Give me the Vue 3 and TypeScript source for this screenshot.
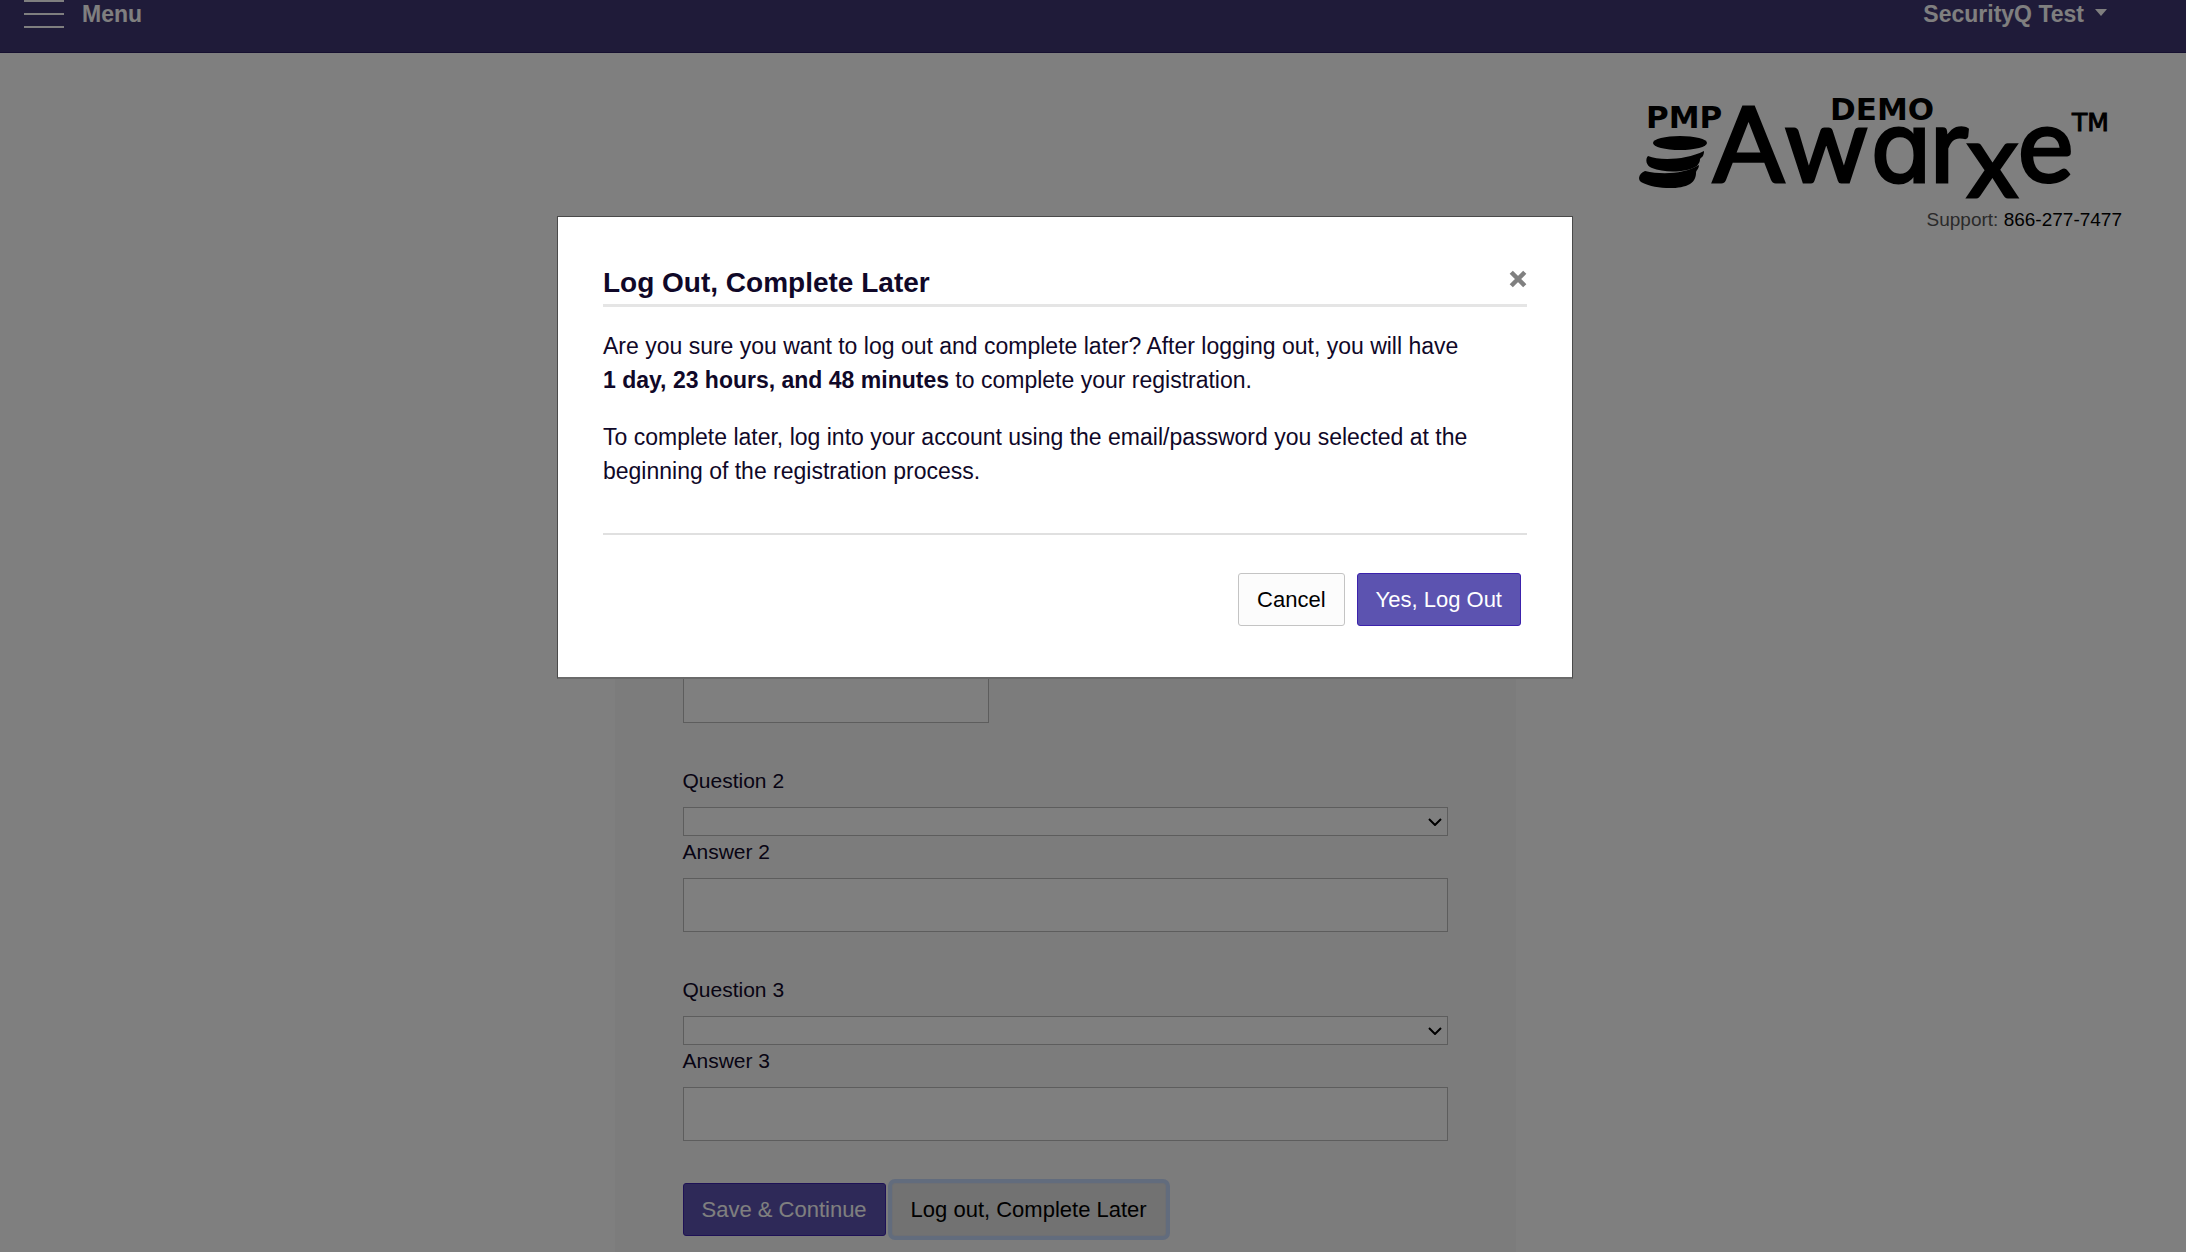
<script setup lang="ts">
import { ref } from 'vue'

interface SecurityQuestion {
  id: number
  question: string
  answer: string
}

const firstAnswer = ref('')
const questions = ref<SecurityQuestion[]>([
  { id: 2, question: '', answer: '' },
  { id: 3, question: '', answer: '' },
])
const dialogOpen = ref(true)
const timeLeft = '1 day, 23 hours, and 48 minutes'
</script>

<template>
  <div class="page">
    <header class="topbar">
      <button type="button" class="menu">
        <span class="bars"><i></i><i></i><i></i></span>
        Menu
      </button>
      <button type="button" class="user">SecurityQ Test <span class="caret"></span></button>
    </header>

    <div class="brand">
      <svg class="logo" viewBox="0 0 502 121" role="img" aria-label="PMP Awarxe">
        <ellipse cx="60" cy="59" rx="27" ry="7" />
        <path d="M28 72C40 77 66 76 84 67C84 72 82 73 80 75C80 78 79 79 77 82C66 89 44 89 32 84C26 82 25 75 28 72Z" />
        <path d="M25 87C42 91 64 90 79 81C79 85 76 86 76 89C76 92 75 97 70 100C58 107 33 104 23 99C17 97 18 90 25 87Z" />
        <text class="heavy" x="26" y="44" font-size="31">PMP</text>
        <text class="heavy" x="210" y="36" font-size="31">DEMO</text>
        <g class="word">
          <text x="93" y="98" font-size="105">A</text>
          <text x="165" y="98" font-size="105">w</text>
          <text class="round" x="251" y="98" font-size="98">a</text>
          <text x="310" y="98" font-size="105">r</text>
          <text x="347" y="113" font-size="102">x</text>
          <text x="398" y="98" font-size="105">e</text>
        </g>
        <text class="tm" x="452" y="47" font-size="25">TM</text>
      </svg>
      <p class="support">Support: <a href="tel:8662777477">866-277-7477</a></p>
    </div>

    <main class="panel">
      <form class="form" @submit.prevent>
        <input v-model="firstAnswer" class="field short" type="text" aria-label="Answer 1" />

        <div v-for="q in questions" :key="q.id" class="group">
          <label :for="`question-${q.id}`">Question {{ q.id }}</label>
          <div class="picker">
            <select :id="`question-${q.id}`" v-model="q.question">
              <option value=""></option>
            </select>
            <svg class="chevron" viewBox="0 0 14 8" aria-hidden="true"><path d="M1 1L7 7L13 1" /></svg>
          </div>
          <label :for="`answer-${q.id}`">Answer {{ q.id }}</label>
          <input :id="`answer-${q.id}`" v-model="q.answer" class="field" type="text" />
        </div>

        <div class="actions">
          <button type="submit" class="btn primary">Save &amp; Continue</button>
          <button type="button" class="btn later" @click="dialogOpen = true">Log out, Complete Later</button>
        </div>
      </form>
    </main>

    <div v-if="dialogOpen" class="overlay">
      <section class="dialog" role="dialog" aria-modal="true" aria-labelledby="dialog-title">
        <div class="dialog-head">
          <h2 id="dialog-title">Log Out, Complete Later</h2>
          <button type="button" class="close" aria-label="Close" @click="dialogOpen = false">
            <svg viewBox="0 0 16 16" aria-hidden="true"><path d="M2 2L14 14M14 2L2 14" /></svg>
          </button>
        </div>
        <div class="dialog-body">
          <p>
            Are you sure you want to log out and complete later? After logging out, you will have<br />
            <strong>{{ timeLeft }}</strong> to complete your registration.
          </p>
          <p>
            To complete later, log into your account using the email/password you selected at the<br />
            beginning of the registration process.
          </p>
        </div>
        <div class="dialog-foot">
          <button type="button" class="btn cancel" @click="dialogOpen = false">Cancel</button>
          <button type="button" class="btn primary">Yes, Log Out</button>
        </div>
      </section>
    </div>
  </div>
</template>

<style>
body {
  margin: 0;
  background: #ffffff;
}
</style>

<style scoped>
.page {
  box-sizing: border-box;
  min-height: 100vh;
  font-family: 'Liberation Sans', Arial, sans-serif;
  font-size: 22px;
  color: #100828;
}

button,
input,
select {
  font: inherit;
  box-sizing: border-box;
  margin: 0;
}

.topbar {
  display: flex;
  justify-content: space-between;
  align-items: flex-start;
  box-sizing: border-box;
  height: 53px;
  padding: 0 79px 0 24px;
  background: #3e3672;
  border-bottom: 1px solid #2c2060;
}

.menu,
.user {
  display: flex;
  align-items: flex-start;
  padding: 0;
  border: 0;
  background: none;
  color: #ffffff;
  font-size: 23px;
  font-weight: 700;
  line-height: 28px;
}

.menu {
  gap: 18px;
}

.bars {
  display: flex;
  flex-direction: column;
  justify-content: space-between;
  width: 40px;
  height: 28px;
}

.bars i {
  height: 2px;
  background: #ffffff;
}

.user {
  gap: 11px;
}

.caret {
  margin-top: 9px;
  border: 6px solid transparent;
  border-top: 7px solid #ffffff;
  border-bottom: 0;
}

.brand {
  display: flex;
  flex-direction: column;
  align-items: flex-end;
  padding: 31px 64px 0 0;
}

.logo {
  display: block;
  width: 502px;
  height: 121px;
  overflow: visible;
  fill: #000000;
}

.heavy {
  font-family: 'DejaVu Sans', sans-serif;
  font-weight: 700;
}

.word {
  font-family: Lato, sans-serif;
  font-weight: 400;
  stroke: #000000;
  stroke-width: 3;
}

.round {
  font-family: Inter, sans-serif;
  font-feature-settings: 'cv11';
}

.tm {
  font-family: 'DejaVu Sans', sans-serif;
  stroke: #000000;
  stroke-width: 1;
}

.support {
  margin: 0;
  font-size: 19px;
  line-height: 29px;
  color: #555555;
}

.support a {
  color: #000000;
  text-decoration: none;
}

.panel {
  box-sizing: border-box;
  width: calc(100% - 56px);
  max-width: 957px;
  margin: 405px auto 0;
  padding-right: 56px;
}

.form {
  display: flex;
  flex-direction: column;
  gap: 42px;
  padding: 30px 68px 16px;
  background: #f9f9f9;
}

.group {
  display: flex;
  flex-direction: column;
}

label {
  margin-bottom: 10px;
  font-size: 21px;
  line-height: 32px;
}

.field {
  width: 100%;
  height: 54px;
  padding: 0 18px;
  border: 1px solid #bababa;
  border-radius: 0;
  background: #ffffff;
}

.short {
  width: 40%;
}

.picker {
  position: relative;
}

.picker select {
  display: block;
  width: 100%;
  height: 29px;
  padding: 0 28px 0 8px;
  border: 1px solid #bababa;
  border-radius: 0;
  background: #ffffff;
  appearance: none;
}

.chevron {
  position: absolute;
  top: 11px;
  right: 6px;
  width: 14px;
  height: 8px;
  fill: none;
  stroke: #000000;
  stroke-width: 2;
  pointer-events: none;
}

.actions {
  display: flex;
  gap: 6px;
}

.btn {
  height: 53px;
  padding: 0 18px;
  border: 1px solid transparent;
  border-radius: 3px;
  white-space: nowrap;
}

.primary {
  background: #5c53b0;
  border-color: #3c22ac;
  color: #ffffff;
}

.later {
  background: #e4e4e4;
  border-color: #dcdfe6;
  color: #000000;
  box-shadow: 0 0 0 4px #c4d8fa;
}

.cancel {
  background: #fcfcfc;
  border-color: #c4c4c4;
  color: #000000;
}

.overlay {
  position: fixed;
  inset: 0;
  display: flex;
  justify-content: center;
  align-items: flex-start;
  padding: 216px 56px 0 0;
  background: rgba(0, 0, 0, 0.5);
}

.dialog {
  box-sizing: border-box;
  width: 90%;
  max-width: 1016px;
  padding: 45px 45px 51px;
  border: 1px solid #4a4a4a;
  border-bottom: 2px solid #6a6a6a;
  background: #ffffff;
}

.dialog-head {
  display: flex;
  justify-content: space-between;
  align-items: flex-start;
  border-bottom: 3px solid #e5e5e5;
}

.dialog-head h2 {
  margin: 0;
  font-size: 28px;
  line-height: 42px;
}

.close {
  margin-top: 8px;
  padding: 0;
  border: 0;
  background: none;
}

.close svg {
  display: block;
  width: 18px;
  height: 18px;
  fill: none;
  stroke: #808080;
  stroke-width: 4;
}

.dialog-body {
  padding: 22px 0 45px;
  border-bottom: 2px solid #e0e0e0;
}

.dialog-body p {
  margin: 0;
  font-size: 23px;
  line-height: 34px;
}

.dialog-body p + p {
  margin-top: 23px;
}

.dialog-foot {
  display: flex;
  justify-content: flex-end;
  gap: 12px;
  padding: 38px 6px 0 0;
}
</style>
